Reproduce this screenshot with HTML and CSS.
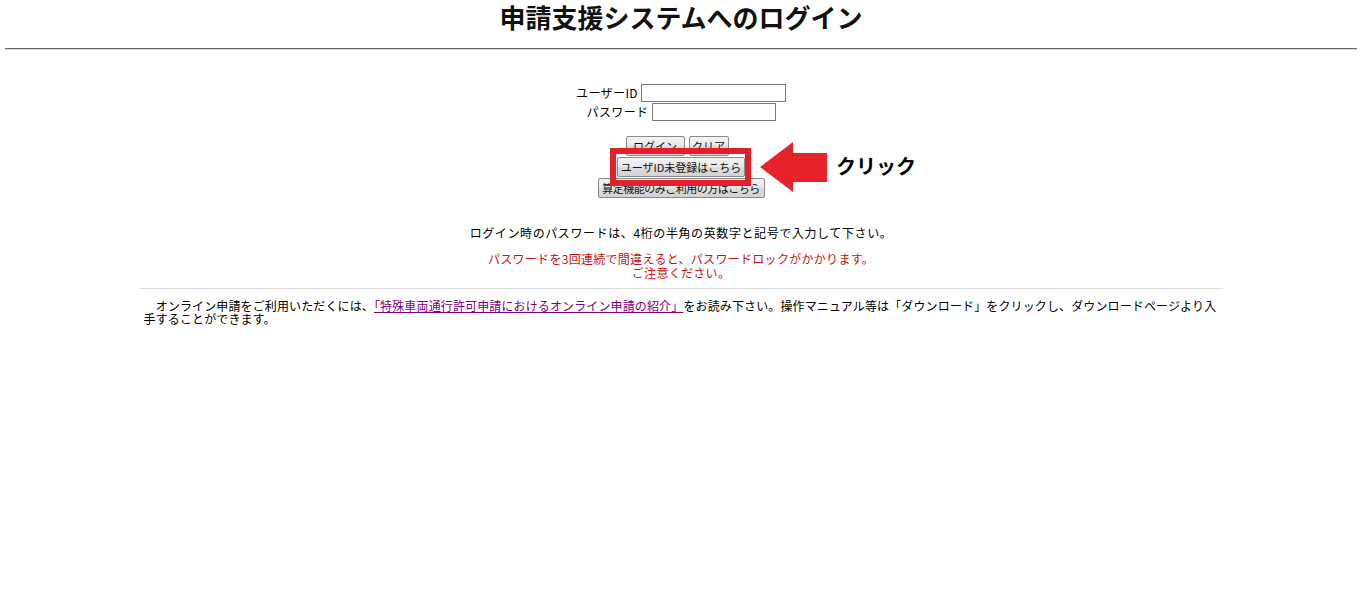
FILE: index.html
```html
<!DOCTYPE html>
<html lang="ja">
<head>
<meta charset="utf-8">
<title>申請支援システムへのログイン</title>
<link rel="stylesheet" href="styles.css">
</head>
<body>
<h1 class="title">申請支援システムへのログイン</h1>
<div class="rule"></div>
<form class="login">
  <div class="field"><label class="lbl">ユーザーID</label><input class="inp inp-id" type="text"></div>
  <div class="field"><label class="lbl">パスワード</label><input class="inp inp-pw" type="password"></div>
  <div class="buttons">
    <div class="btn-row btn-row-first">
      <button type="button" class="btn btn-login">ログイン</button>
      <button type="button" class="btn btn-clear">クリア</button>
    </div>
    <div class="btn-row">
      <div class="reg-wrap">
        <button type="button" class="btn btn-reg">ユーザID未登録はこちら</button>
        <span class="mark-box"></span>
        <svg class="mark-arrow" width="70" height="50" viewBox="0 0 70 50" aria-hidden="true">
          <polygon points="0,25 33,0 33,11 67,11 67,40 33,40 33,50" fill="#e8222a"/>
        </svg>
        <span class="mark-text">クリック</span>
      </div>
    </div>
    <div class="btn-row">
      <button type="button" class="btn btn-calc">算定機能のみご利用の方はこちら</button>
    </div>
  </div>
</form>
<p class="note">ログイン時のパスワードは、4桁の半角の英数字と記号で入力して下さい。</p>
<p class="warn">パスワードを3回連続で間違えると、パスワードロックがかかります。<br>ご注意ください。</p>
<div class="info">
  <p class="info-text">　オンライン申請をご利用いただくには、<a class="info-link" href="#">「特殊車両通行許可申請におけるオンライン申請の紹介」</a>をお読み下さい。操作マニュアル等は「ダウンロード」をクリックし、ダウンロードページより入手することができます。</p>
</div>
</body>
</html>
```

FILE: styles.css
```css
html, body {
  margin: 0;
  padding: 0;
  background: #ffffff;
}
body {
  font-family: "Noto Sans CJK JP", "Noto Sans", sans-serif;
  font-size: 12px;
  color: #000;
}
.title {
  margin: 0;
  height: 34px;
  line-height: 34px;
  font-size: 26px;
  font-weight: bold;
  text-align: center;
  color: #111;
}
.rule {
  margin: 14px 5px 0 5px;
  border-top: 1px solid #6b6b6b;
  border-bottom: 1px solid #d6d6d6;
}
.login {
  margin: 33px 0 0 0;
  display: flex;
  flex-direction: column;
  align-items: center;
}
.field {
  display: flex;
  align-items: center;
  justify-content: center;
  height: 19px;
  gap: 3px;
}
.lbl {
  line-height: 14px;
  font-size: 12px;
  letter-spacing: 0.4px;
}
.inp {
  box-sizing: border-box;
  height: 18px;
  border: 1px solid #7a7a7a;
  padding: 0 2px;
  margin: 0;
  font-size: 12px;
  background: #fff;
}
.inp-id { width: 145px; }
.inp-pw { width: 124px; }
.buttons {
  margin-top: 15px;
  display: flex;
  flex-direction: column;
  align-items: center;
  gap: 1px;
}
.btn-row {
  display: flex;
  justify-content: center;
  gap: 4px;
  height: 20px;
}
.btn-row-first {
  padding-right: 8px;
}
.btn {
  box-sizing: border-box;
  height: 20px;
  margin: 0;
  padding: 0;
  border: 1px solid #8a8a8a;
  border-radius: 2px;
  background: linear-gradient(#f3f3f3, #e8e8e8 50%, #dcdcdc 51%, #d3d3d3);
  font-family: "Noto Sans CJK JP", sans-serif;
  font-size: 11px;
  line-height: 16px;
  color: #111;
  white-space: nowrap;
}
.btn-login { width: 59px; }
.btn-clear { width: 40px; }
.btn-reg { width: 128px; }
.btn-calc { width: 167px; letter-spacing: -0.5px; }
.reg-wrap {
  position: relative;
  height: 20px;
}
.mark-box {
  position: absolute;
  top: -9px;
  left: -7px;
  right: -6px;
  bottom: -9px;
  border: 6px solid #e41f27;
  z-index: 2;
}
.mark-arrow {
  position: absolute;
  left: 143px;
  top: -15px;
  z-index: 2;
}
.mark-text {
  position: absolute;
  left: 219px;
  top: -2px;
  white-space: nowrap;
  font-size: 20px;
  line-height: 22px;
  font-weight: bold;
  color: #000;
}
.note {
  margin: 28px 0 0 0;
  text-align: center;
  line-height: 14px;
  letter-spacing: 0.6px;
}
.warn {
  margin: 12px 0 0 0;
  text-align: center;
  line-height: 14px;
  color: #c81414;
  letter-spacing: 0.3px;
}
.info {
  width: 1083px;
  margin: 8px auto 0 auto;
  border-top: 1px solid #dddddd;
  padding-top: 10px;
}
.info-text {
  margin: 0;
  padding-left: 4px;
  width: 1077px;
  line-height: 13px;
  letter-spacing: 0.13px;
}
.info-link {
  color: #800080;
  text-decoration: underline;
}
```
